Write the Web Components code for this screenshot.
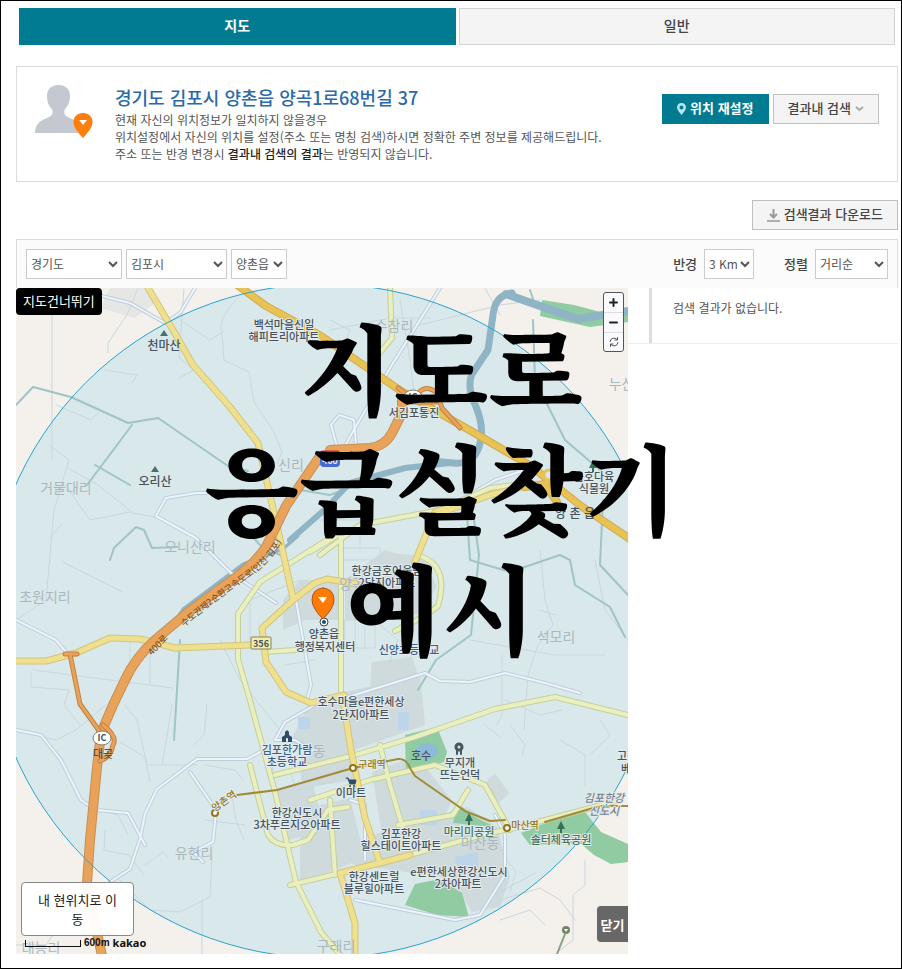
<!DOCTYPE html>
<html lang="ko">
<head>
<meta charset="utf-8">
<meta name="viewport" content="width=device-width, initial-scale=1">
<title>지도로 응급실찾기 예시</title>
<style>
  html { font-family: "Noto Sans CJK KR", "Noto Sans", sans-serif; }
  body { margin: 0; color: #444; font-size: 12px; }
</style>
</head>
<body>
<er-page></er-page>

<template id="tpl-page">
  <style>
    :host { display: block; box-sizing: border-box; min-height: 100vh; border: 1px solid #000; background: #fff; padding: 7px 3px 14px 15px; }
    er-location { margin-top: 21px; }
    .tools { display: flex; justify-content: flex-end; margin: 18px 0 9px; }
    .result { display: grid; grid-template-columns: minmax(0, 612fr) minmax(0, 270fr); align-items: start; position: relative; }
    .title { position: absolute; top: 17px; left: 0; right: 32px; margin: 0; text-align: center; color: #000; font-family: "Noto Serif CJK KR", "Noto Sans CJK KR", serif; font-size: 98px; line-height: 120px; font-weight: 900; pointer-events: none; white-space: nowrap; }
  </style>
  <er-tabs></er-tabs>
  <er-location></er-location>
  <div class="tools">
    <er-button><svg slot="icon" width="13" height="13" viewBox="0 0 13 13" fill="none" stroke="#999"><path d="M6.500 0v8M3 5l3.500 3.500L10 5" stroke-width="2"/><path d="M0 12h13" stroke-width="1.500"/></svg>검색결과 다운로드</er-button>
  </div>
  <er-filter></er-filter>
  <div class="result">
    <er-map></er-map>
    <er-results>검색 결과가 없습니다.</er-results>
    <h1 class="title">지도로<br>응급실찾기<br>예시</h1>
  </div>
</template>

<template id="tpl-tabs">
  <style>
    :host { display: grid; grid-template-columns: 1fr 1fr; gap: 3px; padding: 0 3px; }
    button { font: 500 14px/20px "Noto Sans CJK KR", sans-serif; height: 37px; border: 1px solid #d4d4d4; background: #f4f4f4; color: #444; padding: 0 0 4px; }
    button[aria-selected="true"] { background: #007b92; border-color: #007b92; color: #fff; font-weight: 700; }
  </style>
  <button role="tab" aria-selected="true">지도</button>
  <button role="tab" aria-selected="false">일반</button>
</template>

<template id="tpl-button">
  <style>
    :host { display: inline-block; }
    button { display: flex; align-items: center; gap: 4px; height: 30px; box-sizing: border-box; padding: 0 14px 2px; border: 1px solid #c0c0c0; background: #f4f4f4; color: #444; font: 500 13px/18px "Noto Sans CJK KR", sans-serif; white-space: nowrap; }
    :host([primary]) button { background: #007b92; border-color: #007b92; color: #fff; font-weight: 700; }
    ::slotted(svg) { display: block; margin-top: 2px; }
  </style>
  <button type="button"><slot name="icon"></slot><span><slot></slot></span><slot name="after"></slot></button>
</template>

<template id="tpl-location">
  <style>
    :host { display: flex; align-items: flex-start; box-sizing: border-box; border: 1px solid #dcdcdc; min-height: 116px; padding: 17px 18px 17px 18px; }
    .avatar { flex: none; width: 80px; height: 56px; }
    .text { flex: 1; min-width: 0; }
    h2 { margin: 0 0 1px; color: #2a6aab; font-size: 18px; line-height: 26px; font-weight: 500; }
    p { margin: 0; font-size: 12px; line-height: 17px; color: #555; white-space: nowrap; }
    b { color: #222; font-weight: 500; }
    .actions { display: flex; gap: 4px; margin-top: 10px; }
  </style>
  <svg class="avatar" viewBox="0 0 80 56" aria-hidden="true">
    <path fill="#c4c8d0" d="M23.500 1c8 0 11.500 5 11.500 11-.2 7-2.500 10-5.500 14-1 4 1 6 5 8 9 3 12 7 13 15H0c0-8 4-12 12-15 5-2 6-4 5.500-8C14 22 12.200 19 12 12 12 6 15.500 1 23.500 1z"/>
    <path fill="#ff7f0e" d="M48 29c6 0 9.500 4 9.500 9 0 6-6 12-9.500 16-3.500-4-9.500-10-9.500-16 0-5 3.500-9 9.500-9z"/><path fill="#fff" d="M44 36h8l-4 5z"/>
  </svg>
  <div class="text">
    <h2>경기도 김포시 양촌읍 양곡1로68번길 37</h2>
    <p>현재 자신의 위치정보가 일치하지 않을경우</p>
    <p>위치설정에서 자신의 위치를 설정(주소 또는 명칭 검색)하시면 정확한 주변 정보를 제공해드립니다.</p>
    <p>주소 또는 반경 변경시 <b>결과내 검색의 결과</b>는 반영되지 않습니다.</p>
  </div>
  <div class="actions">
    <er-button primary><svg slot="icon" width="9" height="12" viewBox="0 0 9 12"><path fill="#b8e4ef" fill-rule="evenodd" d="M4.500 0C7.300 0 9 2 9 4.300 9 7 6.500 9.500 4.500 12 2.500 9.500 0 7 0 4.300 0 2 1.700 0 4.500 0zm0 2.500a2 2 0 1 0 0 4 2 2 0 0 0 0-4z"/></svg>위치 재설정</er-button>
    <er-button>결과내 검색<svg slot="after" width="9" height="6" viewBox="0 0 9 6" fill="none" stroke="#aaa" stroke-width="2"><path d="M1 1l3.500 3L8 1"/></svg></er-button>
  </div>
</template>

<template id="tpl-filter">
  <style>
    :host { display: flex; align-items: center; gap: 4px; box-sizing: border-box; height: 49px; padding: 0 9px; border: 1px solid #dcdcdc; border-bottom: 0; background: #fbfbfb; }
    select { box-sizing: border-box; height: 30px; border: 1px solid #ccc; border-radius: 0; background: #fff; color: #555; padding: 0 0 2px; font: 400 12px/18px "Noto Sans CJK KR", sans-serif; }
    .w96 { width: 96px; } .w101 { width: 101px; } .w50 { width: 50px; } .w73 { width: 73px; }
    .fit { width: auto; }
    .right { margin-left: auto; display: flex; align-items: center; gap: 30px; }
    label { display: flex; align-items: center; gap: 7px; font-size: 13px; line-height: 18px; font-weight: 500; color: #444; }
  </style>
  <select class="w96" aria-label="시도"><option>경기도</option></select>
  <select class="w101" aria-label="시군구"><option>김포시</option></select>
  <select class="fit" aria-label="읍면동"><option>양촌읍</option></select>
  <div class="right">
    <label>반경 <select class="w50"><option>3 Km</option></select></label>
    <label>정렬 <select class="w73"><option>거리순</option></select></label>
  </div>
</template>

<template id="tpl-results">
  <style>
    :host { display: block; border-bottom: 1px solid #eee; }
    div { margin-left: 21px; border-left: 3px solid #ddd; padding: 11px 21px 26px; font-size: 12px; line-height: 18px; color: #555; white-space: nowrap; }
  </style>
  <div><slot></slot></div>
</template>

<template id="tpl-map">
  <style>
    :host { display: block; position: relative; aspect-ratio: 612 / 666; overflow: hidden; background: #f4f0eb; }
    .canvas { display: block; width: 100%; height: 100%; }
    button, a { box-sizing: border-box; font-family: "Noto Sans CJK KR", sans-serif; }
    .skip { position: absolute; top: 0; left: 0; padding: 4px 7px 5px; border-radius: 4px; background: #000; color: #fff; font-size: 13px; line-height: 18px; text-decoration: none; }
    .zoom { box-sizing: border-box; position: absolute; top: 4px; right: 4px; width: 21px; border: 1px solid #555; border-radius: 3px; background: #fafafc; display: grid; overflow: hidden; }
    .zoom button { height: 20px; padding: 0; border: 0; border-bottom: 1px solid #ddd; background: none; display: grid; place-items: center; }
    .zoom button:last-child { border: 0; height: 18px; }
    .here { position: absolute; left: 5px; bottom: 18px; width: 113px; height: 54px; border: 1px solid #888; border-radius: 4px; background: #fffffff5; color: #222; font-size: 13px; line-height: 19px; padding: 0 14px; word-break: break-all; }
    .close { position: absolute; right: 0; bottom: 12px; width: 31px; height: 36px; padding: 0; border: 0; border-radius: 4px 0 0 4px; background: #676767; color: #fff; font-size: 13px; font-weight: 700; }
    .scale { position: absolute; left: 9px; bottom: 4px; display: flex; align-items: center; gap: 3px; color: #111; font: 700 10px/14px "Liberation Sans", sans-serif; }
    .scale i { width: 56px; height: 7px; box-sizing: border-box; border: 1px solid #111; border-top: 0; }
    .scale b { font: 700 11px/14px "Noto Sans", sans-serif; }
    path, polyline { fill: none; stroke-linejoin: round; stroke-linecap: round; }
    .lane { stroke: #cad7de; stroke-width: 1; }
    .teal { stroke: #9fc5c6; stroke-width: 2; }
    .river { stroke: #8fb4c5; }
    .wc { stroke: #bfcede; stroke-width: 4; } .w { stroke: #edf4fa; stroke-width: 2; }
    .pc { stroke: #c6cf9b; stroke-width: 6; } .p { stroke: #e9efbf; stroke-width: 4; }
    .yc { stroke: #d3c47e; stroke-width: 7; } .y { stroke: #efe08e; stroke-width: 5; }
    .gc { stroke: #cfaa50; stroke-width: 8; } .g { stroke: #e8c253; stroke-width: 6; }
    .oc { stroke: #c68f55; stroke-width: 10; } .o { stroke: #e8a25a; stroke-width: 8; }
    .rc { stroke: #c28342; stroke-width: 5; } .r { stroke: #e8a25a; stroke-width: 3; }
    .metro { stroke: #a18b38; stroke-width: 2; }
    text { font-family: "Noto Sans CJK KR", sans-serif; text-anchor: middle; font-size: 11px; font-weight: 500; fill: #48535d; paint-order: stroke; stroke: #e2ecee; stroke-width: 2px; stroke-linejoin: round; }
    text.area { font-size: 14px; font-weight: 400; fill: #a9b8c0; stroke: none; }
    text.spot { font-size: 12px; stroke: none; }
    text.school { fill: #39618c; }
    text.park { fill: #45755f; }
    text.rail { fill: #94741b; font-size: 10px; }
    text.way { fill: #86501b; font-size: 9px; stroke: none; }
    text.plain { stroke: none; }
  </style>
  <svg class="canvas" viewBox="16 288 612 666" preserveAspectRatio="xMidYMid slice" role="img" aria-label="양촌읍 주변 지도"></svg>
  <a class="skip" href="#results">지도건너뛰기</a>
  <div class="zoom">
    <button type="button" aria-label="확대"><svg width="9" height="9" stroke="#222" stroke-width="2"><path d="M4.500 1v7M1 4.500h7"/></svg></button>
    <button type="button" aria-label="축소"><svg width="9" height="9" stroke="#222" stroke-width="2"><path d="M1 4.500h7"/></svg></button>
    <button type="button" aria-label="새로고침"><svg width="10" height="10" stroke="#555"><path d="M1 4.500A4 4 0 0 1 8 2.500M8.500 .5v2.500H6M9 5.500A4 4 0 0 1 2 7.500M1.500 9.500V7H4"/></svg></button>
  </div>
  <button type="button" class="here">내 현위치로 이동</button>
  <div class="scale"><i></i><span>600m</span><b>kakao</b></div>
  <button type="button" class="close">닫기</button>
</template>

<script>
const define = (name, id, ready) => customElements.define(name, class extends HTMLElement {
  constructor() {
    super();
    this.attachShadow({ mode: "open" }).append(document.getElementById(id).content.cloneNode(true));
    if (ready) ready(this.shadowRoot);
  }
});

/* Map geometry: every list holds path data; cased roads are drawn twice. */
const blocks = [
  "M300 580h40v40h-35l-22 10v-30z", "M345 580l40-30 45 15v45l-35 10h-50z", "M382 552l40 4 15 30-15 25-30-5z",
  "M310 700l110-25 5 50-85 30-50-12z", "M372 662l40-5 8 24-50 10z",
  "M372 772l45-16 35 45-15 30-55 5z", "M300 755l48-10 5 35-50 8z",
  "M300 810l50-12 15 60-65 25z", "M372 835l95-28 30 20 13 50-10 30-28 5-20-33-100-15z", "M483 785l12-12 14 20-10 10z", "M272 790l40-10 12 50-35 10z"
];
const greens = [
  "M405 735l32-8 10 25-3 10-38 12z", "M457 803l18 14 20 10-42-4z", "M521 833l22-9 42-12 16 20 27 12v18l-17 2-17-9-14-12-50 2z",
  "M405 905l10-21 25-5 22 14 7 24-32-2z", "M542 300l32 5 30 8 24-5v14l-38 5-50-11z"
];
const lanes = [
  "M16 620l30-20 8-90 15-50-20-15", "M52 288v172", "M56 405l35 15 8-8M105 370l32 5-5 8", "M68 468l30 17 35 28 22 4 30 12",
  "M65 485l25 35 40-8", "M63 562l60 30M50 538l12-14", "M33 670l140 18M130 640v45M150 645v40", "M16 730l40 10 20-10 30-25M31 672v15l38 3-5 15 16 20",
  "M120 742l25 15 5 25M125 705l12 15 10 45h50M172 705l-10 60M207 705l-3 30-10 10M205 765l30 5 8 10", "M231 790l5 30 8 20", "M98 810l20 5 10 20M105 830l-1 20 25 5 15 20M145 865l18-13 5 5M120 880l30 30 30 2 30-15 2-40",
  "M202 954v-55M16 945h30l10-15", "M184 288l-5 70 15 12-15 8M138 288l-10 25-20 30 0 10M180 320l30 20 13-8M330 330l60-12 40 0M330 320l20 10-8 20",
  "M400 300l10 60 5 40M420 325l80-20 40-5M500 315l-15-27", "M595 560l10 50 23 30",
  "M540 550l5 50 8 25-15 20-10 30-4 55M555 615l-15-5M505 700l35 15 22-5M470 640l85 15 50 0", "M502 655l0 60-5 10M485 725l15 12M510 725l15 20-3 10M560 740l25 15 0 30M600 720l10 15-20 20",
  "M585 860v25l-12 10v45l-15 12M500 900l40-12 20 12 15 20M500 920l30-10 15 15M495 895l40-22M501 852l15 20-6 20", "M290 770l45-12 4 22-42 10zM300 768l4 18M315 764l4 20",
  "M345 620h30v28h-30zM355 620v28M365 620v28M380 625l18 15-10 25M285 665l30-5M395 660l20 15", "M250 640v-40l50-20", "M205 820l40 5M220 640l20 40 40 50", "M320 520l40 0 0 30M345 548h35v25", "M340 560h45M350 535l-15 0",
  "M236 300q-20 20-14 35l2 25 25 12 5 30 20 30 8 20-5 12"
];
const teal = [
  "M16 405l17-18 38 10 57 26 30-5 70 48 20 5", "M132 425l-30 40-15 20M95 465l35 20", "M110 560l4-12 22-21 8 3 8 18 25-1", "M300 490l30 5 50-20", "M280 555l-20-10-18-20",
  "M180 640l-6 100", "M467 515l3 45 40 12 50-17 10 5 5 25 35 22 15 30", "M474 520l5 35-8 80-35 25-18 30", "M533 320l2 60 30 60 35 30", "M603 500l-3 65 28 30", "M530 290l5 15"
];
const whites = [
  "M16 620l40 20 15 18", "M16 730l25 5 20 25 20 40 15 10 32 3 17 32", "M110 882l20-13 10-30 5-25 12-25 40-30h50l15-8",
  "M190 772l22 32 4 8-3 30-20 10 10 10", "M275 740l10-18 35-20M275 740h20l15 10", "M156 516l10-18 30-5 10 0M156 516l40 22 35 35 45 30", "M296 600l15 85M311 685l-4 15",
  "M345 698l80-25 15 8 30 1 35-9 40 10 35 10", "M435 515l60-35 30-10", "M440 288l-50 80-35 60-10 18", "M338 450l-7-25 8-10 15 5 2 25", "M355 900l60 12 40 8 25-5 25-40 0-40-10-20", "M350 800l15 5 0 55M270 760l3 22",
  "M70 288l60 15 35 20 15-10 15-25"
];
const pales = [
  "M330 538l-70 44-22 32v45l13 45 24 88 21 90 25 50 25 30", "M310 552l30-18M341 535v165", "M16 661h20", "M265 652l45-3", "M320 555l40-30 80-15 50-22 40-5",
  "M275 775l80-20 60-18 80-28 60-12 73 18", "M250 765l18 70q8 12 25 10l15-5 20-30 20-3", "M380 745l10 40 15 50M310 800l60-20 65-15 50 20 25 45", "M468 790l-15 25-55 10M340 873l40-10 110-30 25-5 105-28",
  "M330 800l5 75", "M420 556q30 10 18 50l-13 10-30 15", "M290 885l50-12", "M390 288l2 50-25 30"
];
const yellows = [
  "M148 288l25 42 20 35 37 42 28 36 8 35 12 52 15 68", "M16 661h30l30-8 34-15 30 1 35 9 75-3", "M293 600l-31 28 4 34 20 30 25 11 33-8",
  "M293 600l22-17 12-4 30 5M415 562l20-50 20-8", "M343 700l8 50 14 68 15 45M340 873l40-10 30-8M340 873l15 50v31", "M435 515l55-20 40-10"
];
const labels = [
  ["spot", 164, 350, "천마산"], ["", 284, 329, "백석마을신일"], ["", 284, 341, "해피트리아파트"], ["area", 394, 331, "수참리"], ["area", 628, 389, "누산리"],
  ["", 414, 417, "서김포통진"], ["spot", 155, 486, "오리산"], ["area", 66, 493, "거물대리"], ["area", 291, 470, "신리"], ["area", 190, 552, "오니산리"],
  ["area", 45, 602, "초원지리"], ["", 594, 481, "금호다육"], ["", 594, 493, "식물원"], ["spot", 575, 518, "양 촌 읍"], ["area", 352, 589, "양곡"],
  ["", 387, 575, "한강금호어울림"], ["", 387, 587, "2단지아파트"], ["", 324, 638, "양촌읍"], ["", 325, 651, "행정복지센터"], ["school", 409, 654, "신양초등학교"],
  ["area", 556, 642, "석모리"], ["", 361, 706, "호수마을e편한세상"], ["", 361, 719, "2단지아파트"], ["plain", 103, 758, "대곶"], ["school", 287, 754, "김포한가람"],
  ["school", 287, 766, "초등학교"], ["area", 319, 756, "동"], ["plain", 421, 760, "호수"], ["", 460, 767, "무지개"], ["", 460, 779, "뜨는언덕"], ["", 351, 797, "이마트"],
  ["", 297, 817, "한강신도시"], ["", 297, 829, "3차푸르지오아파트"], ["", 401, 838, "김포한강"], ["", 401, 850, "힐스테이트아파트"], ["park", 469, 836, "마리미공원"],
  ["area", 480, 848, "마산동"], ["park", 561, 844, "솔터체육공원"], ["", 459, 876, "e편한세상한강신도시"], ["", 458, 888, "2차아파트"], ["", 374, 881, "한강센트럴"],
  ["", 374, 893, "블루힐아파트"], ["area", 194, 858, "유현리"], ["area", 336, 951, "구래리"], ["area", 41, 953, "대능리"], ["", 627, 760, "고창"], ["", 631, 773, "베이"],
  ["rail", 372, 768, "구래역"], ["rail", 525, 829, "마산역"]
];
const paths = (cls, list) => list.map(d => `<path class="${cls}" d="${d}"/>`).join("");
const shapes = (fill, list) => list.map(d => `<path style="fill:${fill}" d="${d}"/>`).join("");
const cased = (outer, inner, list) => paths(outer, list) + paths(inner, list);
const tree = (x, y) => `<path style="fill:#35705b" d="M${x} ${y - 6}l4 8h-3v4h-2v-4h-3z"/>`;
const peak = (x, y) => `<path style="fill:#466f6e" d="M${x} ${y - 3}l4 6h-8z"/>`;
const ic = (x, y) => `<ellipse cx="${x}" cy="${y}" rx="9" ry="7" fill="#fff" stroke="#857d6a"/><text class="plain" x="${x}" y="${y + 3}" style="font-size:9px;font-weight:700">IC</text>`;
const expressway = "M103 960l-6-27-10-50 3-43 7-73 4-34 12-28 12-25q10-22 30-40l32-27 41-30q26-18 38-36l20-41 34-50";

const drawMap = root => {
  root.querySelector(".canvas").innerHTML =
    `<rect x="16" y="288" width="612" height="666" fill="#f4f0eb"/>` + shapes("#e6e6e4", ["M110 288h40l5 15-20 15-35-10z"]) +
    `<circle cx="324" cy="621" r="337" fill="#d9e8ea"/>` +
    shapes("#cfdadd", blocks) + paths("lane", lanes) + shapes("#90cba1", greens) +
    `<ellipse cx="427" cy="751" rx="11" ry="8" fill="#8dbbd7"/>` +
    shapes("#bcd5ea", ["M298 717h12v12h-12z", "M420 810h17v15h-17z", "M455 857l23-5v15l-20 3z", "M398 712h12l-2 18h-10z"]) +
    paths("teal", teal) +
    `<path class="river" stroke-width="7" d="M512 293q-17 2-19 22l-5 35-16 24q-5 12 2 28 12 26 5 45-6 18-25 16l-24-2"/>
    <path class="river" stroke-width="8" d="M506 294l34 12 38 13 50-8"/>
    <path class="river" stroke-width="6" d="M450 463l-45 5-55 15q-15 15-20 22l-40 35"/>
    <path class="river" stroke-width="3" d="M298 536l-15 13-40 15-60 45-20 30"/>` +
    cased("wc", "w", whites) + cased("pc", "p", pales) + cased("yc", "y", yellows) +
    cased("gc", "g", ["M236 284l30 22 55 30 80 55 70 40 60 35 50 40 52 35", "M525 487l20-3 12 18"]) +
    cased("oc", "o", [expressway, "M330 450l40-2q15-2 22-15l10-20v-14"]) +
    cased("rc", "r", ["M398 388l18 14h22M417 395q8-12 20-2l5 15 18 20", "M70 654l10 50 20 28M103 725q15 12 10 20-2 12-13 16", "M65 654h12"]) +
    `<circle cx="549" cy="475" r="5" fill="#d9e8ea" stroke="#e8c253" stroke-width="3"/>
    <path class="metro" d="M215 813l3-7M237 795l40-5 76-22 45-9q8-1 12 9l5 8 50 35 25 10 15-1M545 822l55-16h28"/>` +
    [[215, 813], [353, 768], [507, 828]].map(([x, y]) => `<circle cx="${x}" cy="${y}" r="3" fill="#fff" stroke="#94741b" stroke-width="2"/>`).join("") +
    `<circle cx="324" cy="621" r="337" fill="none" stroke="#29a3d0"/>` +
    labels.map(([c, x, y, t]) => `<text class="${c}" x="${x}" y="${y}">${t}</text>`).join("") +
    `<text style="font-style:italic;fill:#78808b" x="604" y="802">김포한강</text><text style="font-style:italic;fill:#78808b" x="604" y="815">신도시</text>
    <path id="way" d="M184 627l28-23 43-31q18-14 33-40"/><text class="way" style="text-anchor:start"><textPath href="#way">수도권제2순환고속도로(인천-김포)</textPath></text>
    <text class="way" transform="translate(160 647) rotate(-47)">400로</text>
    <text class="rail" transform="translate(226 804) rotate(-35)">양촌역</text>` +
    ic(102, 738) + ic(413, 397) +
    `<rect x="251" y="637" width="20" height="12" rx="1" fill="#f4eda9" stroke="#87815b"/><text class="plain" x="261" y="647" style="font-size:9px;font-weight:700">356</text>
    <rect x="320" y="453" width="20" height="14" rx="4" fill="#466bd0"/><path stroke="#d0252b" stroke-width="3" d="M322 452h16"/><text class="plain" x="330" y="464" style="font-size:9px;fill:#fff">400</text>` +
    peak(164, 333) + peak(155, 469) + tree(593, 466) + tree(469, 819) + tree(561, 827) +
    `<circle cx="459" cy="747" r="3" fill="none" stroke="#46565d" stroke-width="3"/><path stroke="#46565d" stroke-width="2" d="M457 750v4M461 750v4"/>
    <path style="fill:#2f4c6b" d="M282 742v-5l3-2v-3l2-2 2 2v3l3 2v5h-4v-4h-2v4z"/>
    <path style="fill:#2f4c6b" stroke="#2f4c6b" d="M346 778h2l1 2h7l-1 4h-5l-2-5"/><circle cx="350" cy="786" r="1" fill="#2f4c6b"/><circle cx="354" cy="786" r="1" fill="#2f4c6b"/>
    <circle cx="566" cy="930" r="4" fill="#728568"/><path style="fill:#fff" d="M564 929h4l-2 3z"/><path stroke="#8c9f85" stroke-width="2" d="M565 934l-8 20"/>
    <circle cx="324" cy="622" r="4" fill="#fff" stroke="#444"/><circle cx="324" cy="622" r="2" fill="#174f7b"/>
    <path style="fill:#ff7a06" stroke="#b3550c" d="M323 588q11 1 11 12 0 8-11 19-11-11-11-19 0-11 11-12z"/><path style="fill:#fff" d="M318 597h9l-4 6z"/>`;
};

define("er-button", "tpl-button");
define("er-tabs", "tpl-tabs");
define("er-location", "tpl-location");
define("er-filter", "tpl-filter");
define("er-results", "tpl-results");
define("er-map", "tpl-map", drawMap);
define("er-page", "tpl-page");
</script>
</body>
</html>
